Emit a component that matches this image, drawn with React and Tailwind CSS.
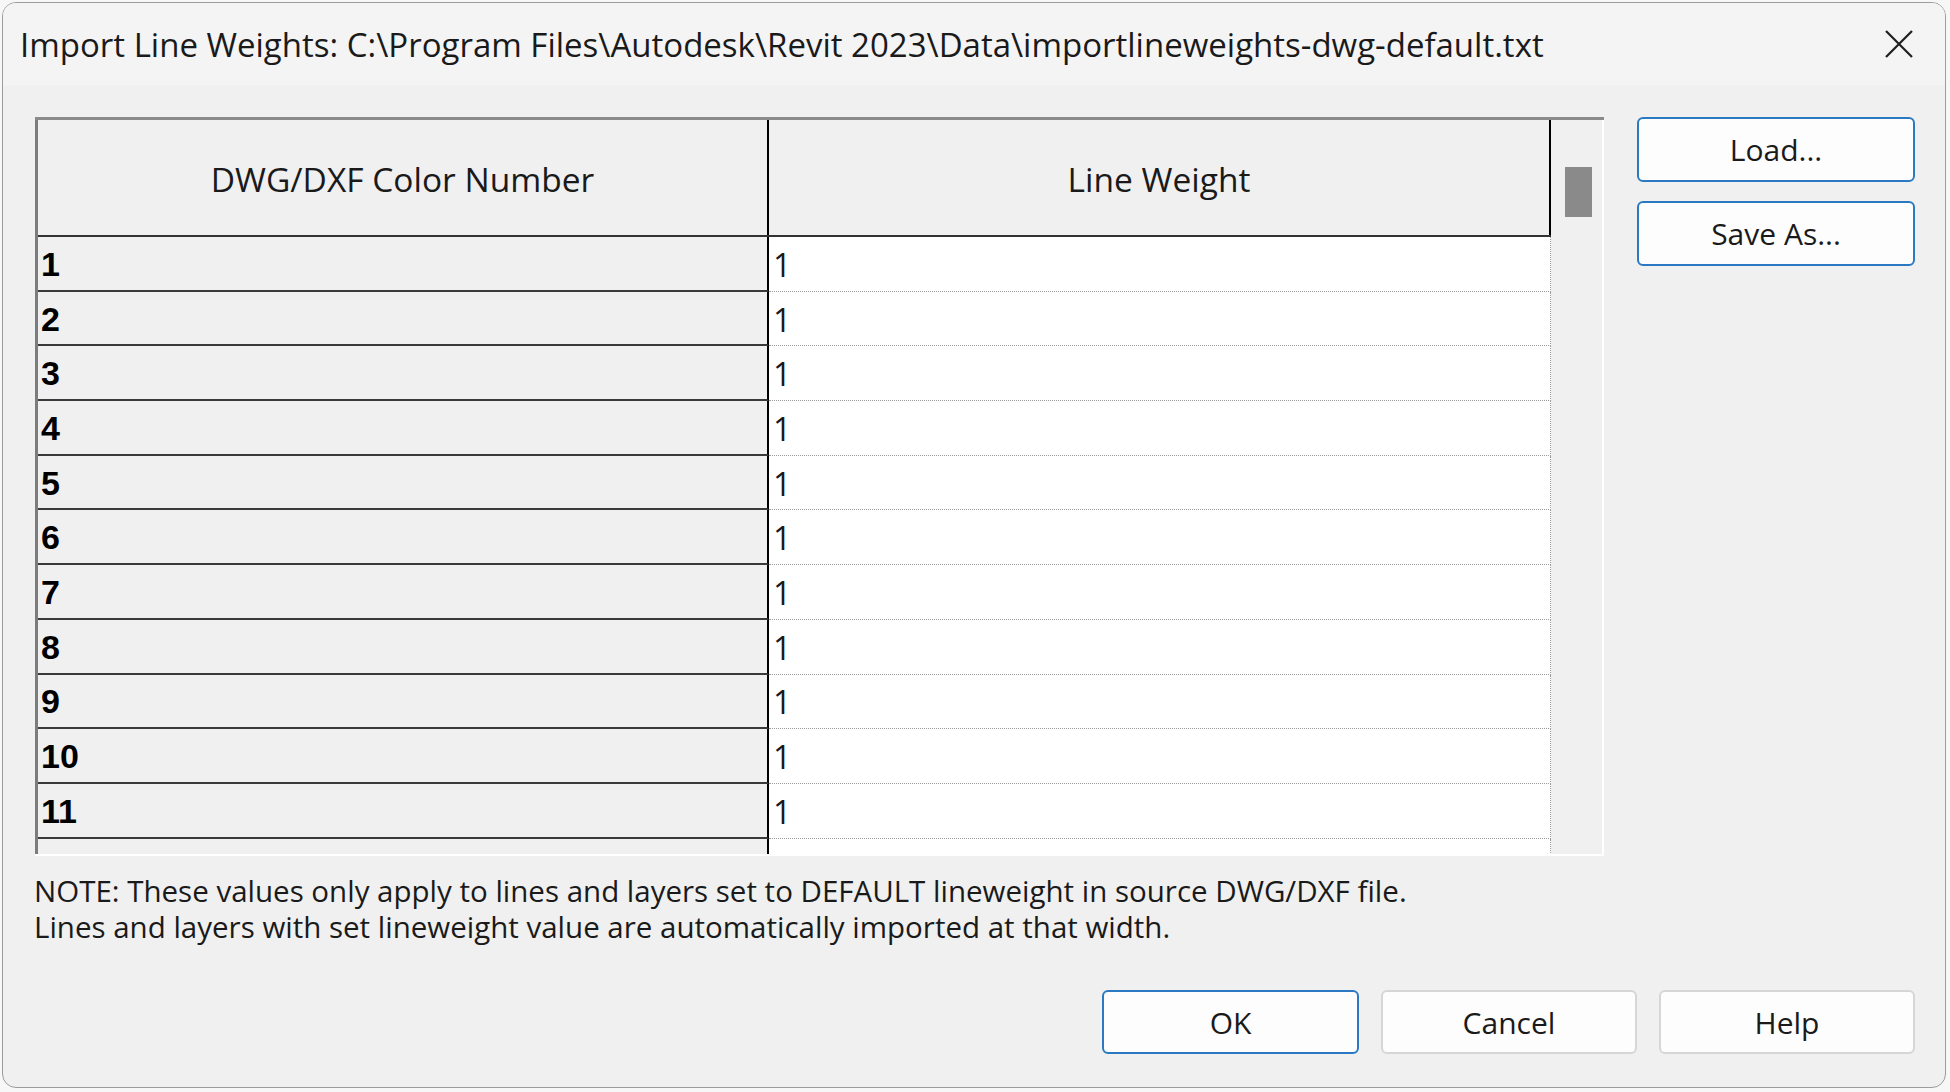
import React from 'react';

const ui = { fontFamily: '"Segoe UI", "Open Sans", "Noto Sans", sans-serif' };
const bold = { fontFamily: 'Tahoma, "Liberation Sans", Arial, sans-serif' };

const rows = Array.from({ length: 12 }, (_, i) => ({ color: i + 1, weight: 1 }));

const CloseIcon = () => (
  <svg width="32" height="32" viewBox="0 0 32 32" fill="none" stroke="#1f1f1f" strokeWidth="2.2">
    <path d="M3 3 L29 29 M29 3 L3 29" />
  </svg>
);

const DialogButton = ({ label, primary, className = '' }) => (
  <button
    className={`flex items-center justify-center rounded-[6px] bg-[#fdfdfd] text-[30px] text-[#1a1a1a] ${
      primary ? 'border-2 border-[#2b79c2]' : 'border-2 border-[#d6d6d6]'
    } ${className}`}
    style={ui}
  >
    {label}
  </button>
);

export default function App() {
  return (
    <div className="w-[1950px] h-[1092px] bg-[#f7f7f7] pt-[2px] pl-[2px] overflow-hidden">
      <div className="w-[1944px] h-[1086px] rounded-[14px] border border-[#9c9c9c] bg-[#f0f0f0] overflow-hidden flex flex-col" style={ui}>
        {/* Title bar */}
        <div className="h-[82px] bg-[#f4f4f4] flex items-center justify-between pl-[17px] pr-[30px]">
          <div className="text-[33px] text-[#1a1a1a] leading-none whitespace-nowrap">
            Import Line Weights: C:\Program Files\Autodesk\Revit 2023\Data\importlineweights-dwg-default.txt
          </div>
          <CloseIcon />
        </div>

        {/* Table + side buttons */}
        <div className="flex pt-[32px] pl-[32px] gap-[33px]">
          <div className="w-[1569px] h-[739px] flex flex-col border-t-[3px] border-[#8a8a8a] border-b-2 border-b-white">
            <div className="flex flex-1 min-h-0">
              {/* Grid */}
              <div className="w-[1516px] flex flex-col border-l-[3px] border-[#7c7c7c]">
                <div className="flex h-[117px] shrink-0 border-b-2 border-[#333]">
                  <div className="w-[731px] flex items-center justify-center pt-[3px] border-r-2 border-black text-[33.5px] text-[#1a1a1a]">
                    DWG/DXF Color Number
                  </div>
                  <div className="flex-1 flex items-center justify-center pt-[3px] border-r-2 border-black text-[33.5px] text-[#1a1a1a]">
                    Line Weight
                  </div>
                </div>
                <div className="flex-1 min-h-0 overflow-hidden">
                  {rows.map((r) => (
                    <div key={r.color} className="flex h-[54.7px]">
                      <div
                        className="w-[731px] flex items-center pl-[3px] pt-[2px] bg-[#f0f0f0] border-r-2 border-black border-b-2 border-b-[#3a3a3a] text-[34px] font-bold text-black"
                        style={bold}
                      >
                        {r.color}
                      </div>
                      <div className="flex-1 flex items-center pl-[4px] pt-[2px] bg-white border-b border-dotted border-[#9a9a9a] border-r border-r-[#9a9a9a] text-[32px] text-[#1a1a1a]">
                        {r.weight}
                      </div>
                    </div>
                  ))}
                </div>
              </div>
              {/* Scrollbar */}
              <div className="flex-1 bg-[#f0f0f0] border-r-2 border-white pt-[47px] pl-[14px]">
                <div className="w-[27px] h-[50px] bg-[#8a8a8a]" />
              </div>
            </div>
          </div>

          <div className="w-[278px] flex flex-col gap-[19px]">
            <DialogButton label="Load..." primary className="h-[65px]" />
            <DialogButton label="Save As..." primary className="h-[65px]" />
          </div>
        </div>

        {/* Note */}
        <div className="mt-[17px] pl-[31px] text-[29.5px] leading-[36px] text-[#1a1a1a]">
          <div>NOTE: These values only apply to lines and layers set to DEFAULT lineweight in source DWG/DXF file.</div>
          <div>Lines and layers with set lineweight value are automatically imported at that width.</div>
        </div>

        {/* Bottom buttons */}
        <div className="mt-[45px] flex justify-end gap-[22px] pr-[30px]">
          <DialogButton label="OK" primary className="w-[257px] h-[64px]" />
          <DialogButton label="Cancel" className="w-[256px] h-[64px]" />
          <DialogButton label="Help" className="w-[256px] h-[64px]" />
        </div>
      </div>
    </div>
  );
}
